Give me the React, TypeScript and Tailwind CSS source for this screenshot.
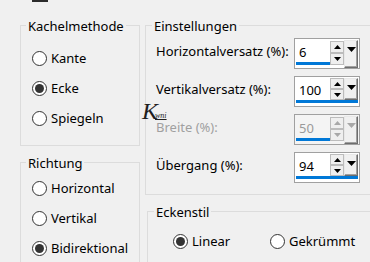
import { FC } from "react";

type RadioProps = {
  label: string;
  checked?: boolean;
  className?: string;
};

const Radio: FC<RadioProps> = ({ label, checked, className }) => (
  <div className={`flex items-center h-[30px] ${className ?? ""}`}>
    <span className="w-[15px] h-[15px] shrink-0 rounded-full border border-[#333333] bg-white flex items-center justify-center">
      {checked && <span className="w-[9px] h-[9px] rounded-full bg-[#333333]" />}
    </span>
    <span className="ml-[4px] text-[13px] leading-[16px] text-black whitespace-nowrap">
      {label}
    </span>
  </div>
);

const Tri: FC<{ up?: boolean; color: string; w?: number; h?: number }> = ({
  up,
  color,
  w = 7,
  h = 4,
}) => (
  <svg width={w} height={h} viewBox={`0 0 ${w} ${h}`}>
    <path d={up ? `M0 ${h}L${w / 2} 0L${w} ${h}Z` : `M0 0L${w} 0L${w / 2} ${h}Z`} fill={color} />
  </svg>
);

type SpinProps = {
  value: string;
  fullBar?: boolean;
  disabled?: boolean;
};

// Edit box with up/down arrows, the dropdown button and the blue slider strip
const Spin: FC<SpinProps> = ({ value, fullBar, disabled }) => {
  const arrow = disabled ? "#a8a8a8" : "#000000";
  const text = (
    <span
      className={`pl-[4px] pt-[5px] text-[13px] leading-[16px] ${
        disabled ? "text-[#9a9a9a]" : "text-black"
      }`}
    >
      {value}
    </span>
  );
  const upDown = (btnH: string) => (
    <div className="w-[14px] flex flex-col">
      <div
        className={`${btnH} border border-[#bcbcbc] bg-[#efefef] flex items-center justify-center`}
      >
        <Tri up color={arrow} />
      </div>
      <div
        className={`${btnH} border border-[#bcbcbc] bg-[#efefef] flex items-center justify-center`}
      >
        <Tri color={arrow} />
      </div>
    </div>
  );
  const drop = (h: string) => (
    <div
      className={`w-[14px] ${h} bg-[#f0f0f0] border-l border-t border-l-[#e8e8e8] border-t-[#e8e8e8] border-r border-b border-r-[#6d6d6d] border-b-[#6d6d6d] shadow-[inset_-1px_-1px_0_#a0a0a0] flex justify-center pt-[6px]`}
    >
      <Tri color={arrow} w={9} h={5} />
    </div>
  );

  return (
    <div
      className={`w-[66px] h-[31px] shrink-0 border border-[#a0a0a0] ${
        disabled ? "bg-[#f4f4f4]" : "bg-white"
      }`}
    >
      {fullBar ? (
        <div className="flex flex-col h-full">
          <div className="flex h-[23px]">
            <div className="w-[35px] flex">{text}</div>
            <div className="pt-[1px]">{upDown("h-[11px]")}</div>
            <div className="pt-[1px]">{drop("h-[22px]")}</div>
          </div>
          <div className="h-[3px] ml-[1px] mr-[1px] bg-[#0078d7]" />
        </div>
      ) : (
        <div className="flex h-full">
          <div className="w-[35px] flex flex-col">
            {text}
            <div className="h-[3px] ml-[1px] mt-auto mb-[3px] bg-[#0078d7]" />
          </div>
          <div className="pt-[2px]">{upDown("h-[12px]")}</div>
          <div className="pt-[1px]">{drop("h-[28px]")}</div>
        </div>
      )}
    </div>
  );
};

const Row: FC<{ label: string; disabled?: boolean; children: React.ReactNode }> = ({
  label,
  disabled,
  children,
}) => (
  <div className="flex items-center h-[31px]">
    <span
      className={`w-[138px] pb-[6px] text-[13px] leading-[16px] whitespace-nowrap ${
        disabled ? "text-[#a0a0a0]" : "text-black"
      }`}
    >
      {label}
    </span>
    {children}
  </div>
);

const legend = "px-[2px] pt-[2px] text-[13px] leading-[16px] text-black";

export default function App() {
  return (
    <div className="relative w-[370px] h-[262px] overflow-hidden bg-[#f0f0f0] flex font-['Noto_Sans','Liberation_Sans',sans-serif]">
      {/* left column */}
      <div className="flex flex-col w-[120px] ml-[20px] shrink-0">
        <div className="ml-[12px] w-[16px] h-[2px] shrink-0 bg-[#2b2b2b]" />
        <fieldset className="mt-[14px] h-[130px] shrink-0 border border-[#dcdcdc]">
          <legend className={`ml-[5px] ${legend}`}>Kachelmethode</legend>
          <div className="pt-[9px] pl-[11px]">
            <Radio label="Kante" />
            <Radio label="Ecke" checked />
            <Radio label="Spiegeln" />
          </div>
        </fieldset>
        <fieldset className="mt-[7px] h-[120px] shrink-0 border border-[#dcdcdc]">
          <legend className={`ml-[5px] ${legend}`}>Richtung</legend>
          <div className="pt-[2px] pl-[11px]">
            <Radio label="Horizontal" />
            <Radio label="Vertikal" />
            <Radio label="Bidirektional" checked />
          </div>
        </fieldset>
      </div>

      {/* right column */}
      <div className="flex flex-col ml-[5px] pt-[16px] shrink-0">
        <fieldset className="w-[230px] h-[179px] shrink-0 border border-[#dcdcdc]">
          <legend className={`ml-[6px] ${legend}`}>Einstellungen</legend>
          <div className="pt-[4px] pl-[10px] flex flex-col gap-[7px]">
            <Row label="Horizontalversatz (%):">
              <Spin value="6" />
            </Row>
            <Row label="Vertikalversatz (%):">
              <Spin value="100" fullBar />
            </Row>
            <Row label="Breite (%):" disabled>
              <Spin value="50" disabled />
            </Row>
            <Row label="Übergang (%):">
              <Spin value="94" fullBar />
            </Row>
          </div>
        </fieldset>
        <fieldset className="mt-[7px] ml-[2px] w-[230px] h-[80px] shrink-0 border border-[#dcdcdc]">
          <legend className={`ml-[6px] ${legend}`}>Eckenstil</legend>
          <div className="pt-[6px] pl-[25px] flex">
            <Radio label="Linear" checked className="w-[97px]" />
            <Radio label="Gekrümmt" />
          </div>
        </fieldset>
      </div>

      {/* signature watermark */}
      <div className="absolute left-[142px] top-[99px] italic text-[#1e1e1e] font-['Liberation_Serif',serif] leading-none flex items-end">
        <span className="text-[24px]">K</span>
        <span className="text-[8px] -ml-[3px] mb-[3px] underline">wni</span>
      </div>
    </div>
  );
}
